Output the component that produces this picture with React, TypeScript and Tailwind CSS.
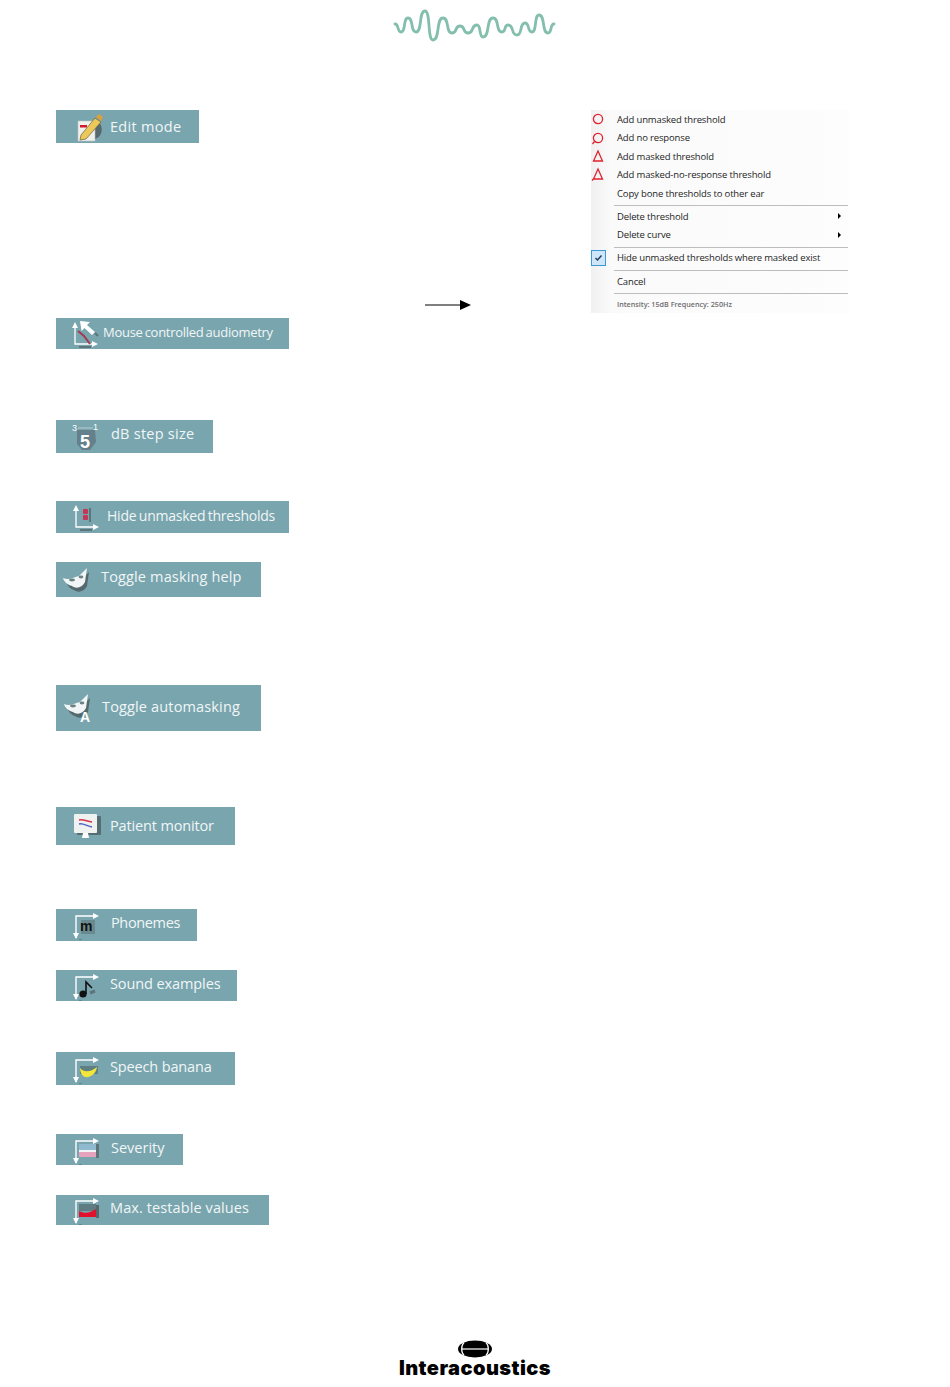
import type { ReactNode } from "react";

// wave logo: extremes of the line, joined with flat tangents
const wavePoints: [number, number][] = [
  [15, 24], [21, 32], [28, 18], [36, 32], [45, 11], [53, 40], [63, 18], [72, 33],
  [80, 26], [88, 33], [97, 25], [103, 37], [113, 18], [122, 32], [128, 25], [137, 35],
  [145, 23], [152, 32], [159, 15], [168, 33], [174, 24],
];

function wavePath() {
  let d = `M ${wavePoints[0][0]} ${wavePoints[0][1]}`;
  for (let i = 1; i < wavePoints.length; i++) {
    const [x1, y1] = wavePoints[i - 1];
    const [x2, y2] = wavePoints[i];
    const k = (x2 - x1) * 0.72;
    d += ` C ${x1 + k} ${y1} ${x2 - k} ${y2} ${x2} ${y2}`;
  }
  return d;
}

const IconBox = ({ children }: { children: ReactNode }) => (
  <svg width="30" height="30" viewBox="0 0 30 30" className="shrink-0">
    {children}
  </svg>
);

// chart axes, arrows going right and down
const AxesDown = () => (
  <g fill="none" stroke="#fff" strokeWidth="1.4">
    <path d="M5 28 V6 H24" />
    <path d="M2 23 L5 29 L8 23 Z M22 3 L28 6 L22 9 Z" fill="#fff" stroke="none" />
    <path d="M8 30 H11" stroke="#5d7478" />
  </g>
);

// chart axes, arrows going up and right
const AxesUp = () => (
  <g fill="none" stroke="#fff" strokeWidth="1.3">
    <path d="M6 7 V25 H25" />
    <path d="M3 9 L6 3 L9 9 Z M23 22 L29 25 L23 28 Z" fill="#fff" stroke="none" />
    <path d="M10 28 H22" stroke="#5d7478" strokeWidth="2" />
  </g>
);

const Mask = () => (
  <g>
    <path d="M4 14 C9 18 14 13 19 13 L27 5 L25 19 C22 25 16 26 12 23 C8 22 5 18 4 14 Z" fill="#55696d" transform="translate(1 2)" />
    <path d="M2 13 C8 16 13 12 18 11 L26 3 L24 17 C21 23 15 24 11 21 C7 20 3 17 2 13 Z" fill="#f2f5f5" />
    <ellipse cx="11" cy="15" rx="3" ry="1.4" fill="#6b8186" />
    <ellipse cx="20" cy="12" rx="2.4" ry="1.4" fill="#6b8186" />
  </g>
);

const icons: Record<string, ReactNode> = {
  edit: (
    <IconBox>
      <path d="M20 8 C29 11 29 24 20 27 H10 V24 Z" fill="#56696e" />
      <rect x="3" y="9" width="17" height="20" fill="#eef1ee" stroke="#b9c3c3" strokeWidth="0.6" />
      <rect x="5" y="13" width="7" height="2.5" fill="#d11a2a" />
      <path d="M6 23 L20 6 L26 10 L11 27 L5 28 Z" fill="#ecc75a" stroke="#6b6330" strokeWidth="0.7" />
      <path d="M21 5 L24 2 L28 5 L26 9 Z" fill="#d9a03c" />
    </IconBox>
  ),
  mouse: (
    <IconBox>
      <AxesUp />
      <path d="M9 12 L15 17 L21 25" fill="none" stroke="#a23a50" strokeWidth="2" />
      <path d="M11 2 L21 3 L18 6 L26 13 L23 16 L15.5 9 L12.5 12 Z" fill="#fff" />
      <path d="M26 14 L29 17" stroke="#5d7478" strokeWidth="2" />
    </IconBox>
  ),
  db: (
    <IconBox>
      <path d="M6 8 H24 L25 20 L19 28 H11 L6 22 Z" fill="#64808a" />
      <path d="M7 6 H22" stroke="#b9cdd1" strokeWidth="1" />
      <text x="1" y="9" fontSize="9" fill="#fff" fontFamily="Liberation Sans">3</text>
      <text x="22" y="8" fontSize="9" fill="#fff" fontFamily="Liberation Sans">1</text>
      <text x="9" y="26" fontSize="18" fontWeight="700" fill="#fff" fontFamily="Liberation Sans">5</text>
    </IconBox>
  ),
  hide: (
    <IconBox>
      <AxesUp />
      <rect x="13" y="7" width="5" height="5" rx="1" fill="#c5375a" />
      <rect x="13" y="13" width="5" height="5" rx="1" fill="#c5375a" />
      <path d="M20 6 V20" stroke="#5d7478" strokeWidth="2" />
    </IconBox>
  ),
  mask: (
    <IconBox>
      <Mask />
    </IconBox>
  ),
  // taller than the others, the A hangs under the mask
  auto: (
    <svg width="30" height="38" viewBox="0 0 30 38" className="shrink-0">
      <g transform="translate(0 2)">
        <Mask />
      </g>
      <text x="18" y="33" fontSize="14" fontWeight="700" fill="#fff" fontFamily="Liberation Sans">A</text>
    </svg>
  ),
  monitor: (
    <IconBox>
      <rect x="5" y="5" width="24" height="19" rx="1" fill="#566e73" />
      <rect x="2" y="3" width="23" height="19" rx="1" fill="#f0f2f2" />
      <path d="M7 9 C11 8 14 10 20 11" fill="none" stroke="#d9304a" strokeWidth="1.5" />
      <path d="M7 13 C11 12 15 15 20 16" fill="none" stroke="#4a63c0" strokeWidth="1.5" />
      <path d="M11 22 H16 L17 27 H10 Z" fill="#fff" />
    </IconBox>
  ),
  phonemes: (
    <IconBox>
      <AxesDown />
      <rect x="10" y="10" width="14" height="14" fill="#6b8a90" />
      <text x="9" y="21" fontSize="14" fontWeight="700" fill="#111" fontFamily="Liberation Sans">m</text>
    </IconBox>
  ),
  sound: (
    <IconBox>
      <AxesDown />
      <circle cx="12" cy="23" r="3.6" fill="#111" />
      <path d="M15 23 V11 L21 17" fill="none" stroke="#111" strokeWidth="1.6" />
      <path d="M19 22 L24 20" stroke="#5d7478" strokeWidth="3" />
    </IconBox>
  ),
  banana: (
    <IconBox>
      <AxesDown />
      <path d="M9 12 H27 V20 H9 Z" fill="#5f7f85" />
      <path d="M9 14 C13 19 20 18 26 13 C25 20 19 24 14 23 C11 22 9 18 9 14 Z" fill="#f2e63a" />
    </IconBox>
  ),
  severity: (
    <IconBox>
      <AxesDown />
      <rect x="8" y="9" width="17" height="6" fill="#8fbad0" />
      <rect x="8" y="15" width="17" height="2" fill="#f2f4f6" />
      <rect x="8" y="17" width="17" height="5" fill="#e7a2bd" />
      <rect x="25" y="9" width="3" height="14" fill="#5d7478" />
    </IconBox>
  ),
  max: (
    <IconBox>
      <AxesDown />
      <rect x="8" y="9" width="17" height="7" fill="#5e7c82" />
      <path d="M8 16 C14 19 19 18 25 14 V22 H8 Z" fill="#e3122c" />
      <rect x="25" y="10" width="3" height="13" fill="#55696d" />
    </IconBox>
  ),
};

type ButtonItem = { label: string; icon: string; box: string; pad: string; text: string };

// toolbar buttons as they are pictured in the page
const afterMenu: ButtonItem[] = [
  { label: "Mouse controlled audiometry", icon: "mouse", box: "mt-[5px] w-[233px] h-[31px]", pad: "pl-[13px]", text: "ml-[4px] mb-[2px] text-[13px] tracking-[-0.28px] [word-spacing:-1px]" },
  { label: "dB step size", icon: "db", box: "mt-[71px] w-[157px] h-[33px]", pad: "pl-[15px]", text: "ml-[10px] mb-[4px] text-[14.5px] tracking-[0.25px]" },
  { label: "Hide unmasked thresholds", icon: "hide", box: "mt-[48px] w-[233px] h-[32px]", pad: "pl-[14px]", text: "ml-[7px] mb-[2px] text-[14px] tracking-[-0.23px] [word-spacing:-1px]" },
  { label: "Toggle masking help", icon: "mask", box: "mt-[29px] w-[205px] h-[35px]", pad: "pl-[5px]", text: "ml-[10px] mb-[4px] text-[14.5px] tracking-[0.15px]" },
  { label: "Toggle automasking", icon: "auto", box: "mt-[88px] w-[205px] h-[46px]", pad: "pl-[6px]", text: "ml-[10px] mb-[2px] text-[14.5px] tracking-[0.15px]" },
  { label: "Patient monitor", icon: "monitor", box: "mt-[76px] w-[179px] h-[38px]", pad: "pl-[16px]", text: "ml-[8px] text-[14.5px] tracking-[-0.15px]" },
  { label: "Phonemes", icon: "phonemes", box: "mt-[64px] w-[141px] h-[32px]", pad: "pl-[15px]", text: "ml-[10px] mb-[4px] text-[14.5px] tracking-[-0.35px]" },
  { label: "Sound examples", icon: "sound", box: "mt-[29px] w-[181px] h-[31px]", pad: "pl-[15px]", text: "ml-[9px] mb-[2px] text-[14.5px] tracking-[-0.1px]" },
  { label: "Speech banana", icon: "banana", box: "mt-[51px] w-[179px] h-[33px]", pad: "pl-[15px]", text: "ml-[9px] mb-[2px] text-[14.5px] tracking-[-0.15px]" },
  { label: "Severity", icon: "severity", box: "mt-[49px] w-[127px] h-[31px]", pad: "pl-[15px]", text: "ml-[10px] mb-[2px] text-[14.5px]" },
  { label: "Max. testable values", icon: "max", box: "mt-[30px] w-[213px] h-[30px]", pad: "pl-[15px]", text: "ml-[9px] mb-[4px] text-[14.5px] tracking-[0.1px]" },
];

const ToolButton = ({ item }: { item: ButtonItem }) => (
  <div className={`flex items-center bg-[#79a5ae] ${item.box} ${item.pad}`}>
    {icons[item.icon]}
    <span className={`leading-none whitespace-nowrap text-[#f1f6f6] ${item.text}`}>{item.label}</span>
  </div>
);

const MenuRow = ({ icon, label, arrow }: { icon?: ReactNode; label: string; arrow?: boolean }) => (
  <div className="flex items-center h-[18.4px]">
    <div className="w-[26px] shrink-0 flex justify-center pr-[12px]">{icon}</div>
    <span className="flex-1 pt-[1px] whitespace-nowrap">{label}</span>
    {arrow && <span className="mr-[8px] border-y-[3px] border-l-[3px] border-y-transparent border-l-black" />}
  </div>
);

const Sep = () => <div className="ml-[23px] mr-px mt-[3px] mb-px h-px bg-[#bdbdbd]" />;

const RedIcon = ({ type }: { type: "circle" | "circleTail" | "tri" | "triTail" }) => (
  <svg width="14" height="14" viewBox="0 0 14 14" fill="none" stroke="#e0222e" strokeWidth="1.3" className="shrink-0">
    {type.startsWith("circle") ? <circle cx="7" cy="7" r="4.6" /> : <path d="M7 2 L11.5 12 H2.5 Z" />}
    {type === "circleTail" && <path d="M3.5 10.5 L1.5 13" />}
    {type === "triTail" && <path d="M2.5 12 L1 13.5" />}
  </svg>
);

const ContextMenu = () => (
  <div className="w-[258px] h-[203px] bg-[linear-gradient(90deg,#f0f0f0_0px,#fafafa_20px,#fdfdfd_100%)] text-[9.5px] tracking-[-0.15px] leading-none text-[#1e1e1e] font-['Open_Sans',sans-serif]">
    <MenuRow icon={<RedIcon type="circle" />} label="Add unmasked threshold" />
    <MenuRow icon={<RedIcon type="circleTail" />} label="Add no response" />
    <MenuRow icon={<RedIcon type="tri" />} label="Add masked threshold" />
    <MenuRow icon={<RedIcon type="triTail" />} label="Add masked-no-response threshold" />
    <MenuRow label="Copy bone thresholds to other ear" />
    <Sep />
    <MenuRow label="Delete threshold" arrow />
    <MenuRow label="Delete curve" arrow />
    <Sep />
    <div className="flex items-center h-[18px]">
      <div className="w-[15px] h-[16px] mr-[11px] bg-[#cfe6f8] border border-[#3a9ad9] flex items-center justify-center">
        <svg width="9" height="8" viewBox="0 0 9 8" fill="none" stroke="#1b3a5c" strokeWidth="1.4">
          <path d="M1.5 4 L3.5 6 L7.5 1.5" />
        </svg>
      </div>
      <span className="pt-[1px] whitespace-nowrap">Hide unmasked thresholds where masked exist</span>
    </div>
    <Sep />
    <MenuRow label="Cancel" />
    <Sep />
    <div className="flex items-center h-[19px] pl-[26px] text-[7.2px] tracking-normal font-semibold text-[#6d6d6d]">
      Intensity: 15dB Frequency: 250Hz
    </div>
  </div>
);

export default function App() {
  return (
    <div className="w-[950px] h-[1387px] bg-white flex flex-col font-['Open_Sans',sans-serif]">
      <div className="flex justify-center">
        <svg width="190" height="50" viewBox="0 0 190 50" fill="none">
          <path d={wavePath()} stroke="#84bfae" strokeWidth="2.8" strokeLinecap="round" />
        </svg>
      </div>

      <div className="mt-[60px] pl-[56px] flex">
        <div className="flex items-center bg-[#79a5ae] w-[143px] h-[33px] pl-[19px]">
          {icons.edit}
          <span className="ml-[5px] mt-[2px] text-[14.5px] leading-none whitespace-nowrap text-[#f1f6f6] tracking-[0.3px]">
            Edit mode
          </span>
        </div>
        <svg width="46" height="10" viewBox="0 0 46 10" className="ml-[226px] mt-[190px]">
          <path d="M0 5 H37" stroke="#000" strokeWidth="1" />
          <path d="M35 0 L46 5 L35 10 Z" fill="#000" />
        </svg>
        <div className="ml-[120px]">
          <ContextMenu />
        </div>
      </div>

      <div className="pl-[56px] flex flex-col">
        {afterMenu.map((item) => (
          <ToolButton key={item.label} item={item} />
        ))}
      </div>

      <div className="mt-[115px] flex flex-col items-center">
        <svg width="36" height="18" viewBox="0 0 36 18">
          <ellipse cx="18" cy="9" rx="17" ry="8.5" fill="#000" />
          <path d="M7 3 C4 5 4 13 7 15 M29 3 C32 5 32 13 29 15" fill="none" stroke="#fff" strokeWidth="1.4" />
          <path d="M5 9 H31" stroke="#fff" strokeWidth="1.2" />
        </svg>
        <span className="mt-[-1px] text-[20px] leading-[22px] font-black tracking-[0.45px] text-black font-['Inter',sans-serif]">
          Interacoustics
        </span>
      </div>
    </div>
  );
}
